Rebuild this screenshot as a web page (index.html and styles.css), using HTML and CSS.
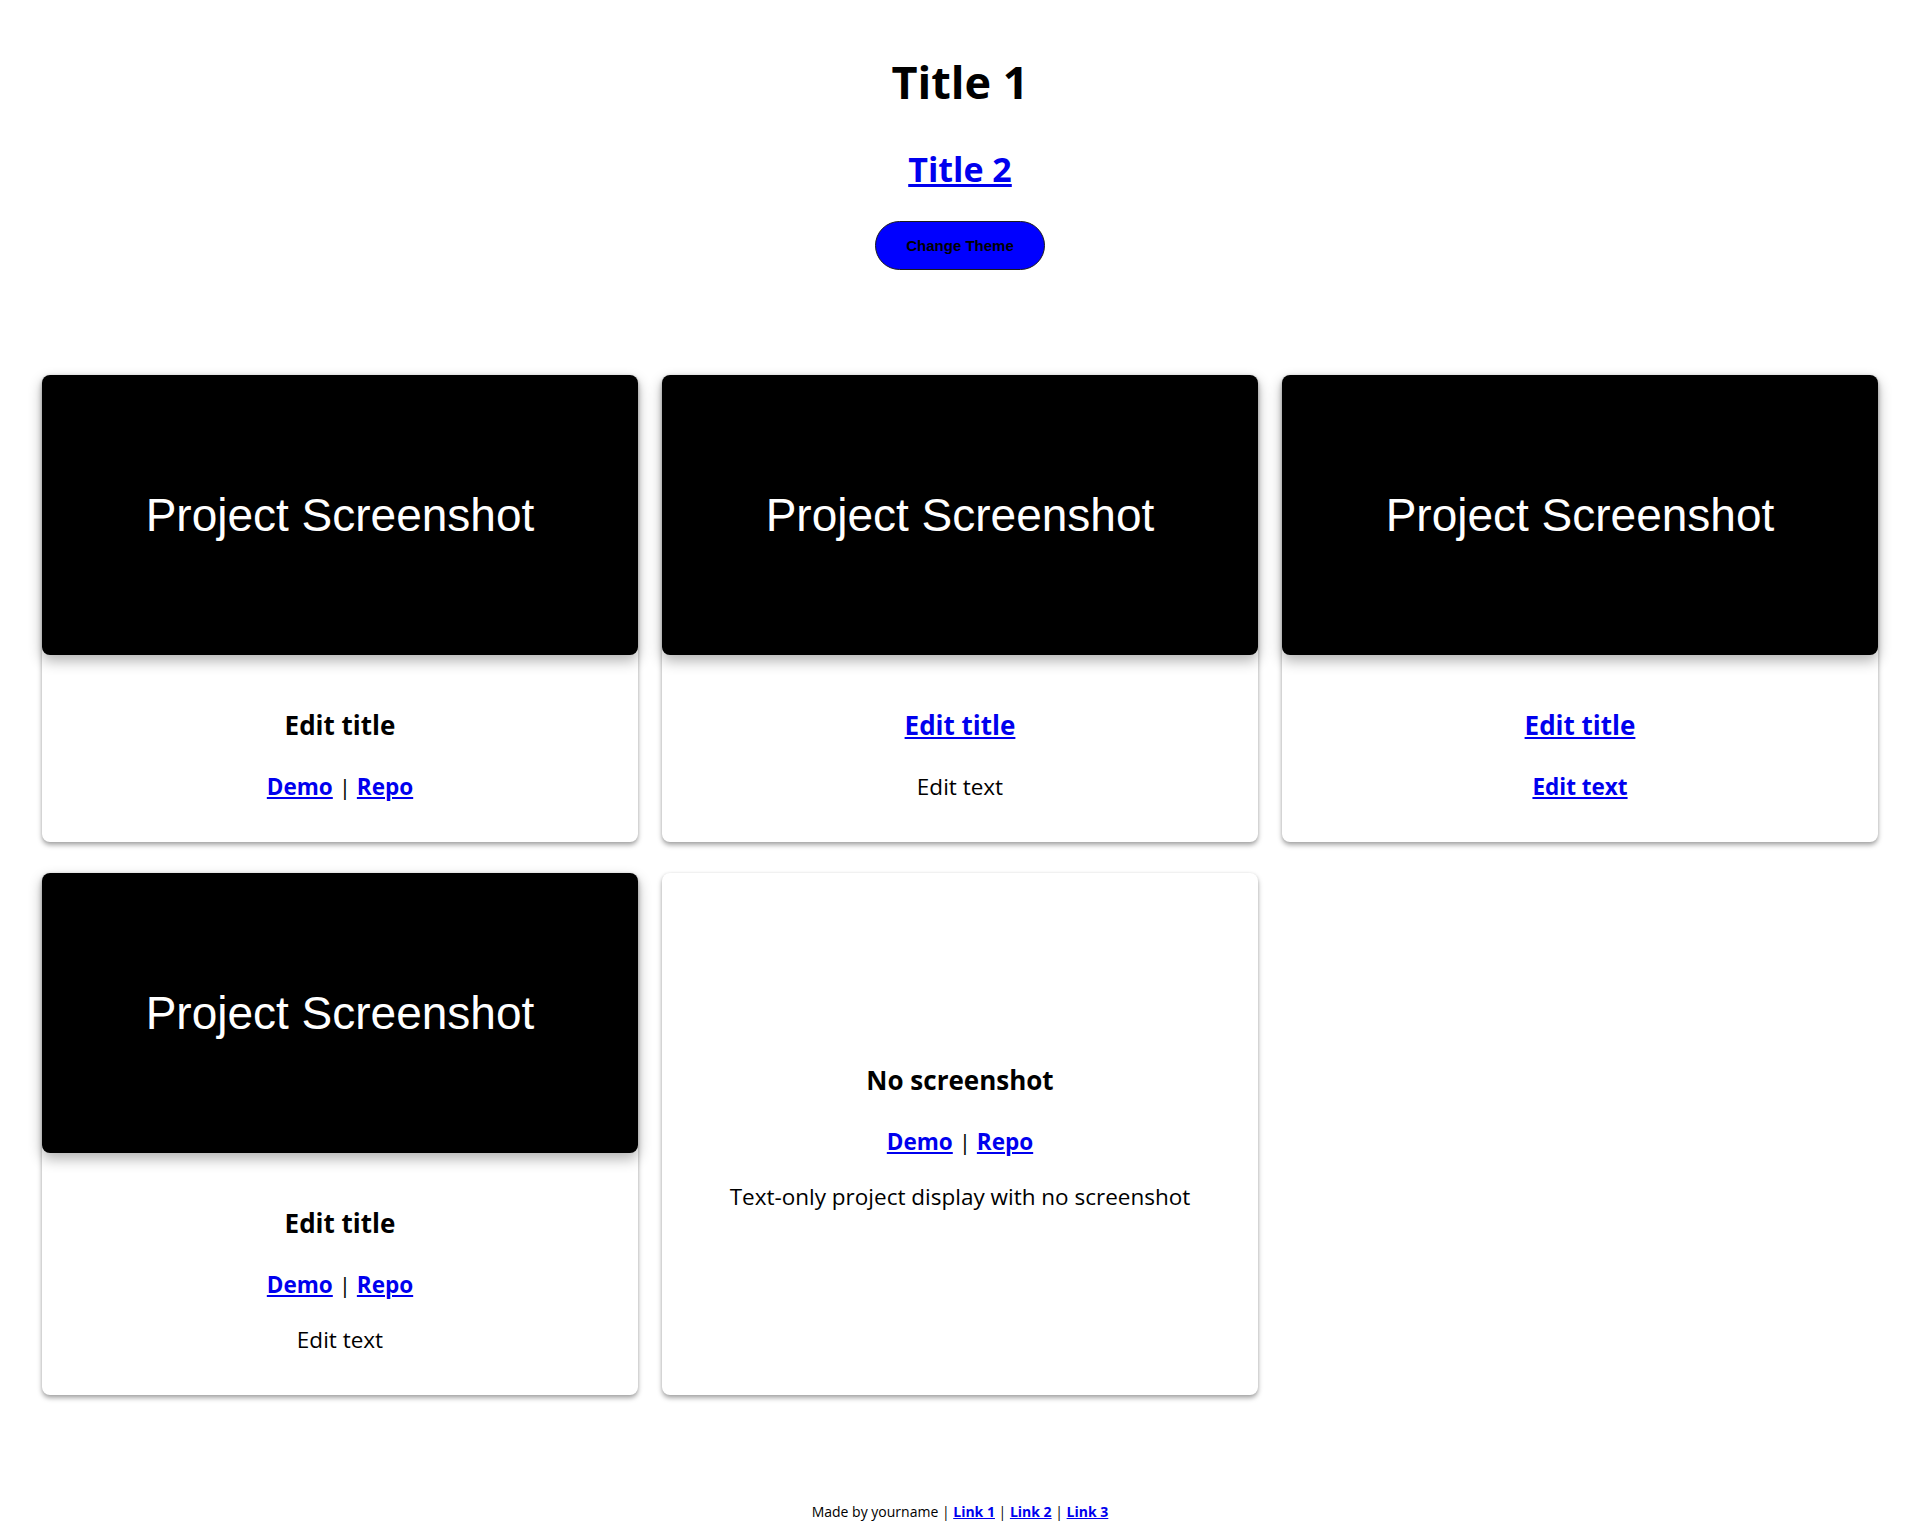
FILE: index.html
```html
<!DOCTYPE html>
<html lang="en">
<head>
<meta charset="utf-8">
<title>Portfolio</title>
<link rel="stylesheet" href="styles.css">
</head>
<body>
<header class="header">
  <h1 class="title-1">Title 1</h1>
  <h2 class="title-2"><a href="#">Title 2</a></h2>
  <button class="theme-btn" type="button">Change Theme</button>
</header>

<main class="projects">
  <article class="card">
    <div class="shot">Project Screenshot</div>
    <div class="card-body">
      <h3 class="card-title">Edit title</h3>
      <p class="links"><a href="#">Demo</a> | <a href="#">Repo</a></p>
    </div>
  </article>

  <article class="card">
    <div class="shot">Project Screenshot</div>
    <div class="card-body">
      <h3 class="card-title"><a href="#">Edit title</a></h3>
      <p class="desc">Edit text</p>
    </div>
  </article>

  <article class="card">
    <div class="shot">Project Screenshot</div>
    <div class="card-body">
      <h3 class="card-title"><a href="#">Edit title</a></h3>
      <p class="desc"><a href="#" class="strong-link">Edit text</a></p>
    </div>
  </article>

  <article class="card">
    <div class="shot">Project Screenshot</div>
    <div class="card-body">
      <h3 class="card-title">Edit title</h3>
      <p class="links"><a href="#">Demo</a> | <a href="#">Repo</a></p>
      <p class="desc">Edit text</p>
    </div>
  </article>

  <article class="card">
    <div class="card-body card-body--solo">
      <h3 class="card-title">No screenshot</h3>
      <p class="links"><a href="#">Demo</a> | <a href="#">Repo</a></p>
      <p class="desc">Text-only project display with no screenshot</p>
    </div>
  </article>
</main>

<footer class="footer">
  Made by yourname | <a href="#">Link 1</a> | <a href="#">Link 2</a> | <a href="#">Link 3</a>
</footer>
</body>
</html>
```

FILE: styles.css
```css
* {
  box-sizing: border-box;
}

html, body {
  margin: 0;
  padding: 0;
  background: #ffffff;
}

body {
  font-family: "Open Sans", "Noto Sans", sans-serif;
  color: #000000;
}

a {
  color: #0000ee;
}

.header {
  display: flex;
  flex-direction: column;
  align-items: center;
  padding-top: 51px;
}

.title-1 {
  margin: 0;
  font-size: 45px;
  font-weight: 700;
  line-height: 61px;
}

.title-2 {
  margin: 34px 0 0;
  font-size: 34px;
  font-weight: 700;
  line-height: 46px;
}

.theme-btn {
  margin-top: 29px;
  height: 49px;
  padding: 0 30px;
  background: #0000ff;
  color: #000000;
  border: 1px solid #1a1a1a;
  border-radius: 25px;
  font-family: "Liberation Sans", Arial, sans-serif;
  font-weight: 700;
  font-size: 15px;
}

.projects {
  display: grid;
  grid-template-columns: repeat(3, 1fr);
  column-gap: 24px;
  row-gap: 31px;
  padding: 0 42px;
  margin-top: 105px;
}

.card {
  display: flex;
  flex-direction: column;
  background: #ffffff;
  border-radius: 8px;
  box-shadow: 0 3px 5px rgba(0, 0, 0, 0.35), 0 0 3px rgba(0, 0, 0, 0.08);
}

.shot {
  height: 280px;
  background: #000000;
  border-radius: 8px;
  box-shadow: 0 6px 14px rgba(0, 0, 0, 0.3);
  display: flex;
  align-items: center;
  justify-content: center;
  color: #ffffff;
  font-family: "Liberation Sans", Arial, sans-serif;
  font-size: 46px;
}

.card-body {
  flex: 1;
  display: flex;
  flex-direction: column;
  justify-content: center;
  align-items: center;
  text-align: center;
  padding: 51px 20px 39px;
}

.card-body--solo {
  padding-top: 45px;
}

.card-title {
  margin: 0 0 27px;
  font-size: 26px;
  font-weight: 700;
  line-height: 38px;
}

.card-title:last-child {
  margin-bottom: 0;
}

.links {
  margin: 0;
  font-size: 22.5px;
  line-height: 32px;
}

.links a {
  font-weight: 700;
}

.links + .desc {
  margin-top: 23px;
}

.desc {
  margin: 0;
  font-size: 22.5px;
  line-height: 32px;
}

.strong-link {
  font-weight: 700;
}

.footer {
  margin-top: 107px;
  text-align: center;
  font-size: 14px;
  line-height: 20px;
  padding-bottom: 24px;
}

.footer a {
  font-weight: 700;
}
```
